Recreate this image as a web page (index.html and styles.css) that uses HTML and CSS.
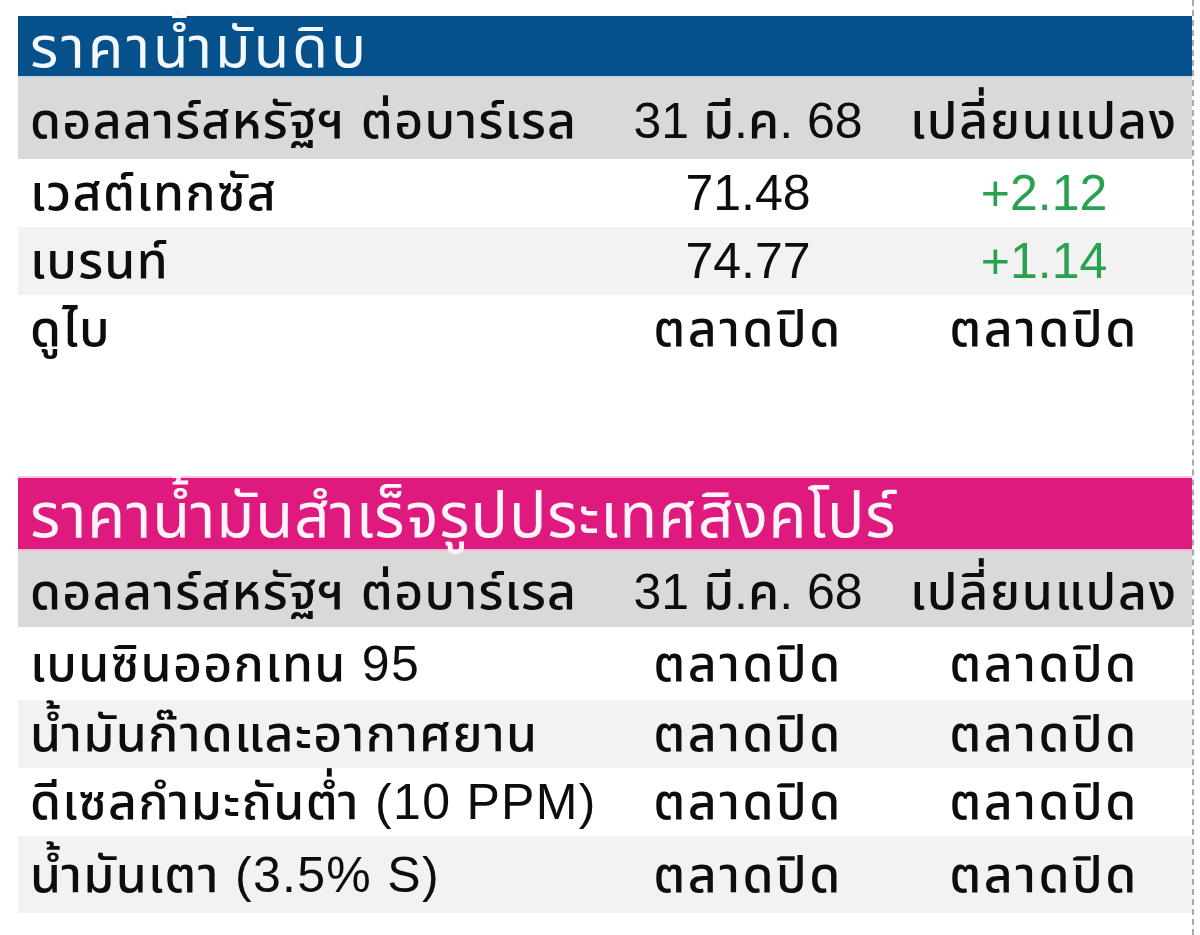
FILE: index.html
```html
<!DOCTYPE html>
<html lang="th">
<head>
<meta charset="utf-8">
<title>ราคาน้ำมัน</title>
<link rel="stylesheet" href="styles.css">
</head>
<body>
<div class="page">
  <section class="block block-crude">
    <div class="title title-blue">ราคาน้ำมันดิบ</div>
    <div class="row head">
      <div class="c1">ดอลลาร์สหรัฐฯ ต่อบาร์เรล</div>
      <div class="c2">31 มี.ค. 68</div>
      <div class="c3 th">เปลี่ยนแปลง</div>
    </div>
    <div class="row">
      <div class="c1">เวสต์เทกซัส</div>
      <div class="c2">71.48</div>
      <div class="c3 up">+2.12</div>
    </div>
    <div class="row alt">
      <div class="c1">เบรนท์</div>
      <div class="c2">74.77</div>
      <div class="c3 up">+1.14</div>
    </div>
    <div class="row">
      <div class="c1">ดูไบ</div>
      <div class="c2 closed">ตลาดปิด</div>
      <div class="c3 closed">ตลาดปิด</div>
    </div>
  </section>

  <section class="block block-refined">
    <div class="title title-pink">ราคาน้ำมันสำเร็จรูปประเทศสิงคโปร์</div>
    <div class="row head head-pink">
      <div class="c1">ดอลลาร์สหรัฐฯ ต่อบาร์เรล</div>
      <div class="c2">31 มี.ค. 68</div>
      <div class="c3 th">เปลี่ยนแปลง</div>
    </div>
    <div class="row r-first">
      <div class="c1">เบนซินออกเทน 95</div>
      <div class="c2 closed">ตลาดปิด</div>
      <div class="c3 closed">ตลาดปิด</div>
    </div>
    <div class="row alt">
      <div class="c1">น้ำมันก๊าดและอากาศยาน</div>
      <div class="c2 closed">ตลาดปิด</div>
      <div class="c3 closed">ตลาดปิด</div>
    </div>
    <div class="row">
      <div class="c1">ดีเซลกำมะถันต่ำ (10 PPM)</div>
      <div class="c2 closed">ตลาดปิด</div>
      <div class="c3 closed">ตลาดปิด</div>
    </div>
    <div class="row alt r-last">
      <div class="c1">น้ำมันเตา (3.5% S)</div>
      <div class="c2 closed">ตลาดปิด</div>
      <div class="c3 closed">ตลาดปิด</div>
    </div>
  </section>
</div>
</body>
</html>
```

FILE: styles.css
```css
html, body {
  margin: 0;
  padding: 0;
  background: #ffffff;
}

body {
  font-family: "Liberation Sans", "Noto Sans Thai", "DejaVu Sans", sans-serif;
  color: #0d0d0d;
}

.page {
  width: 1194px;
  min-height: 935px;
  box-sizing: border-box;
  border-right: 2px dashed #a8a8a8;
  padding: 16px 0 0 18px;
}

.block {
  width: 1174px;
}

.block-refined {
  margin-top: 113px;
}

.title {
  color: #ffffff;
  padding-left: 12px;
  display: flex;
  align-items: flex-end;
  white-space: nowrap;
  box-sizing: border-box;
  line-height: 1;
}

.title-blue {
  background: #06518b;
  color: #f4f9ff;
  height: 61px;
  font-size: 58px;
  letter-spacing: 3px;
  border-bottom: 1px solid #b9d3e6;
  padding-bottom: 0;
}

.title-pink {
  background: #df1a7e;
  color: #fff3fa;
  height: 75px;
  font-size: 62px;
  letter-spacing: 0.9px;
  border-top: 2px solid #f7c6e0;
  border-bottom: 2px solid #f3b7d6;
  padding-bottom: 2px;
}

.row {
  display: grid;
  grid-template-columns: 582px 296px 296px;
  align-items: center;
  height: 68px;
  font-size: 50px;
  font-weight: 500;
  line-height: 1;
  white-space: nowrap;
}

.row.head {
  background: #d9d9d9;
  height: 82px;
  padding-top: 6px;
  box-sizing: border-box;
}

.row.head-pink {
  height: 76px;
}

.row.alt {
  background: #f2f2f2;
}

.row.r-first {
  height: 73px;
}

.row.r-last {
  height: 77px;
}

.c1 {
  padding-left: 12px;
  letter-spacing: 1.3px;
}

.c2, .c3 {
  text-align: center;
}

.th {
  letter-spacing: 1.8px;
}

.closed {
  letter-spacing: 2.5px;
}

.up {
  color: #2aa150;
}
```
